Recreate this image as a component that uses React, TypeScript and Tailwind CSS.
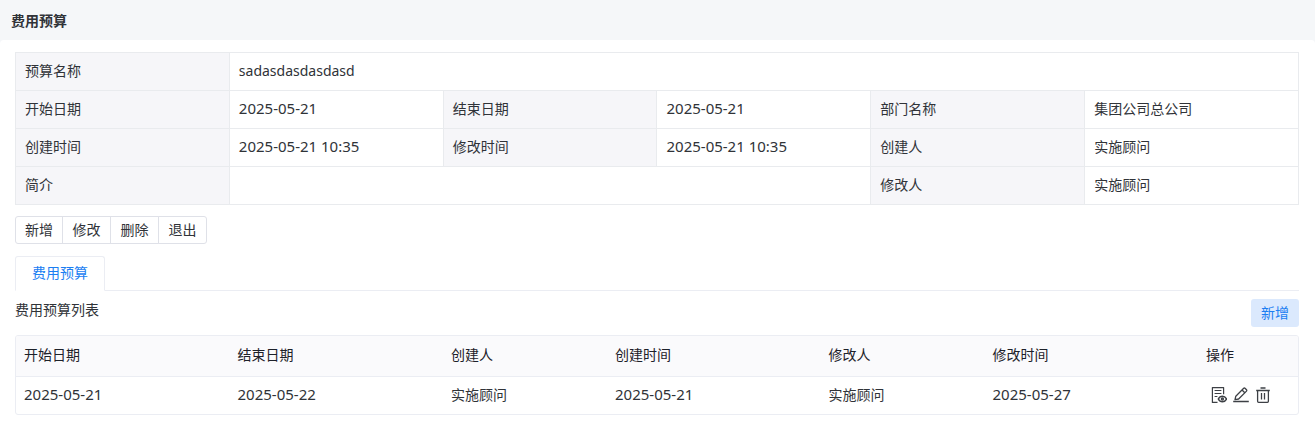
import { useState } from 'react';
import clsx from 'clsx';

type Field = {
  label: string;
  value: string;
  span?: number;
  numeric?: boolean;
};

type BudgetRow = {
  start: string;
  end: string;
  creator: string;
  createdAt: string;
  modifier: string;
  modifiedAt: string;
};

const detailRows: Field[][] = [
  [{ label: '预算名称', value: 'sadasdasdasdasd', span: 5 }],
  [
    { label: '开始日期', value: '2025-05-21', numeric: true },
    { label: '结束日期', value: '2025-05-21', numeric: true },
    { label: '部门名称', value: '集团公司总公司' },
  ],
  [
    { label: '创建时间', value: '2025-05-21 10:35', numeric: true },
    { label: '修改时间', value: '2025-05-21 10:35', numeric: true },
    { label: '创建人', value: '实施顾问' },
  ],
  [
    { label: '简介', value: '', span: 3 },
    { label: '修改人', value: '实施顾问' },
  ],
];

const actions = ['新增', '修改', '删除', '退出'];

const tabs = ['费用预算'];

const budgets: BudgetRow[] = [
  {
    start: '2025-05-21',
    end: '2025-05-22',
    creator: '实施顾问',
    createdAt: '2025-05-21',
    modifier: '实施顾问',
    modifiedAt: '2025-05-27',
  },
];

function ViewIcon() {
  return (
    <svg viewBox="0 0 16 16" className="h-4 w-4" fill="none" stroke="currentColor" strokeWidth="1.2" aria-hidden>
      <path d="M6.5 15.4H1.4V.6h11.2v6.6" strokeLinejoin="round" />
      <path d="M3.6 3.5h6.8M3.6 6.5h6.8M3.6 9.5h2.8" />
      <path d="M7.3 12c1-1.9 2.4-2.8 4.1-2.8s3.1.9 4.1 2.8c-1 1.9-2.4 2.8-4.1 2.8S8.3 13.9 7.3 12Z" strokeWidth="1.5" />
      <circle cx="11.4" cy="12" r="1" strokeWidth="1.4" />
    </svg>
  );
}

function EditIcon() {
  return (
    <svg viewBox="0 0 16 16" className="h-4 w-4" fill="none" stroke="currentColor" strokeWidth="1.3" aria-hidden>
      <path
        d="M2 12.6 2.8 9.2l7.9-7.9a.9.9 0 0 1 1.3 0l1.5 1.5a.9.9 0 0 1 0 1.3L5.6 12 2 12.6Z"
        strokeLinejoin="round"
      />
      <path d="m9 3 2.8 2.8" />
      <path d="M.2 14.5h15.6" />
    </svg>
  );
}

function DeleteIcon() {
  return (
    <svg viewBox="0 0 16 16" className="h-4 w-4" fill="none" stroke="currentColor" strokeWidth="1.3" aria-hidden>
      <path d="M1.2 3.5h13.6M5.5 1h5" />
      <path d="M2.6 3.5v10.8c0 .6.4 1 1 1h8.8c.6 0 1-.4 1-1V3.5" />
      <path d="M6.5 6v6.4M9.5 6v6.4" />
    </svg>
  );
}

const rowActions = [
  { label: '查看', icon: ViewIcon },
  { label: '修改', icon: EditIcon },
  { label: '删除', icon: DeleteIcon },
];

function DetailTable() {
  return (
    <table className="w-full table-fixed border-collapse border border-[#e6e8eb]">
      <colgroup>
        {Array.from({ length: 6 }, (_, i) => (
          <col key={i} className="w-1/6" />
        ))}
      </colgroup>
      <tbody>
        {detailRows.map((row, i) => (
          <tr key={i} className="h-[38px]">
            {row.map((field) => (
              <DetailCells key={field.label} field={field} />
            ))}
          </tr>
        ))}
      </tbody>
    </table>
  );
}

function DetailCells({ field }: { field: Field }) {
  return (
    <>
      <th scope="row" className="border border-[#e9ebee] bg-[#f6f6f9] px-[9px] pb-0.5 text-left font-normal">
        {field.label}
      </th>
      <td
        colSpan={field.span}
        className={clsx('border border-[#e9ebee] px-[9px] pb-0.5', field.numeric && 'text-[15px]')}
      >
        {field.value}
      </td>
    </>
  );
}

function BudgetTable() {
  return (
    <div className="mt-2 overflow-hidden rounded-[3px] border border-[#ebedf3]">
      <table className="w-full table-fixed">
        <thead className="bg-[#fafafc] text-left text-[#1d2129]">
          <tr className="h-10 border-b border-[#ebedf3]">
            <th className="px-2 pb-0.5 font-normal">开始日期</th>
            <th className="px-2 pb-0.5 font-normal">结束日期</th>
            <th className="w-[164px] px-2 pb-0.5 font-normal">创建人</th>
            <th className="px-2 pb-0.5 font-normal">创建时间</th>
            <th className="w-[164px] px-2 pb-0.5 font-normal">修改人</th>
            <th className="px-2 pb-0.5 font-normal">修改时间</th>
            <th className="w-[100px] px-2 pb-0.5 font-normal">操作</th>
          </tr>
        </thead>
        <tbody>
          {budgets.map((row, i) => (
            <tr key={i} className="h-[38px]">
              <td className="px-2 pb-0.5 text-[15px]">{row.start}</td>
              <td className="px-2 pb-0.5 text-[15px]">{row.end}</td>
              <td className="px-2">{row.creator}</td>
              <td className="px-2 pb-0.5 text-[15px]">{row.createdAt}</td>
              <td className="px-2">{row.modifier}</td>
              <td className="px-2 pb-0.5 text-[15px]">{row.modifiedAt}</td>
              <td className="px-[13px]">
                <div className="flex gap-[6px]">
                  {rowActions.map(({ label, icon: Icon }) => (
                    <button key={label} type="button" aria-label={label} className="cursor-pointer text-[#3d4045]">
                      <Icon />
                    </button>
                  ))}
                </div>
              </td>
            </tr>
          ))}
        </tbody>
      </table>
    </div>
  );
}

export default function App() {
  const [activeTab, setActiveTab] = useState(tabs[0]);

  return (
    <div className="min-h-screen bg-[#f5f7f9] font-['Noto_Sans','Noto_Sans_CJK_SC',sans-serif] text-sm text-[#303338]">
      <header className="flex h-10 items-center px-[11px] pt-0.5">
        <h1 className="font-bold">费用预算</h1>
      </header>

      <main className="min-h-[calc(100vh-40px)] rounded-t bg-white px-4 pt-3 pl-[15px] pb-3">
        <DetailTable />

        <div className="mt-[11px] flex">
          {actions.map((action) => (
            <button
              key={action}
              type="button"
              className="-ml-px h-7 w-[49px] cursor-pointer border border-[#dfe1e8] bg-white first:ml-0 first:w-12 first:rounded-l-[3px] last:rounded-r-[3px]"
            >
              {action}
            </button>
          ))}
        </div>

        <div role="tablist" className="mt-3 flex border-b border-[#ebedf3]">
          {tabs.map((tab) => (
            <button
              key={tab}
              type="button"
              role="tab"
              aria-selected={tab === activeTab}
              onClick={() => setActiveTab(tab)}
              className={clsx(
                '-mb-px h-[35px] cursor-pointer rounded-t-[3px] border border-[#ebedf3] px-4 pb-0.5',
                tab === activeTab ? 'border-b-white bg-white text-[#1b7ef2]' : 'bg-[#fafafc]'
              )}
            >
              {tab}
            </button>
          ))}
        </div>

        <section className="mt-2">
          <div className="flex items-start justify-between">
            <h2 className="leading-[22px]">费用预算列表</h2>
            <button type="button" className="h-7 w-12 cursor-pointer rounded-[3px] bg-[#dbe9fd] text-[#1b7ef2]">
              新增
            </button>
          </div>
          <BudgetTable />
        </section>
      </main>
    </div>
  );
}
